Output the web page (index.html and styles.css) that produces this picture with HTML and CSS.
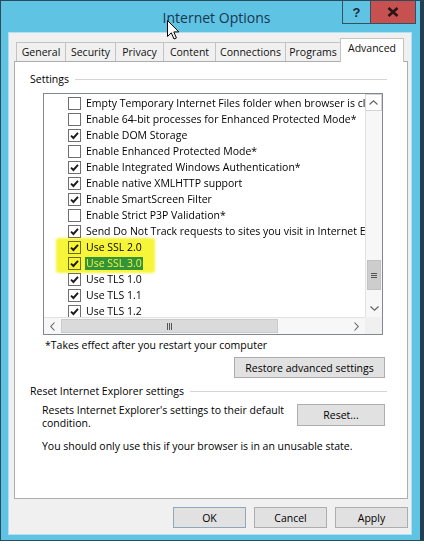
FILE: index.html
```html
<!DOCTYPE html>
<html>
<head>
<meta charset="utf-8">
<title>Internet Options</title>
<link rel="stylesheet" href="styles.css">
</head>
<body>
<div class="window">
  <div class="titlebar">
    <div class="spacer"></div>
    <div class="title">Internet Options</div>
    <div class="caption-btns">
      <div class="cap-btn help">?</div>
      <div class="cap-btn close">
        <svg width="12" height="10" viewBox="0 0 12 10"><path d="M1.5 1 L10.5 9 M10.5 1 L1.5 9" stroke="#2a1616" stroke-width="2.6" fill="none"/></svg>
      </div>
    </div>
  </div>

  <div class="client">
    <div class="tabs">
      <div class="tab t-general">General</div>
      <div class="tab t-security">Security</div>
      <div class="tab t-privacy">Privacy</div>
      <div class="tab t-content">Content</div>
      <div class="tab t-connections">Connections</div>
      <div class="tab t-programs">Programs</div>
      <div class="tab t-advanced active">Advanced</div>
    </div>

    <div class="panel">
      <div class="group-head settings-head"><span>Settings</span><span class="rule"></span></div>

      <div class="listbox">
        <div class="rows">
          <div class="row"><span class="cb"></span><span class="lbl">Empty Temporary Internet Files folder when browser is closed</span></div>
          <div class="row"><span class="cb"></span><span class="lbl">Enable 64-bit processes for Enhanced Protected Mode*</span></div>
          <div class="row"><span class="cb checked"><svg viewBox="0 0 11 11"><path d="M2 5.6 L4.4 8 L9 2.8" /></svg></span><span class="lbl">Enable DOM Storage</span></div>
          <div class="row"><span class="cb"></span><span class="lbl">Enable Enhanced Protected Mode*</span></div>
          <div class="row"><span class="cb checked"><svg viewBox="0 0 11 11"><path d="M2 5.6 L4.4 8 L9 2.8" /></svg></span><span class="lbl">Enable Integrated Windows Authentication*</span></div>
          <div class="row"><span class="cb checked"><svg viewBox="0 0 11 11"><path d="M2 5.6 L4.4 8 L9 2.8" /></svg></span><span class="lbl">Enable native XMLHTTP support</span></div>
          <div class="row"><span class="cb checked"><svg viewBox="0 0 11 11"><path d="M2 5.6 L4.4 8 L9 2.8" /></svg></span><span class="lbl">Enable SmartScreen Filter</span></div>
          <div class="row"><span class="cb"></span><span class="lbl">Enable Strict P3P Validation*</span></div>
          <div class="row"><span class="cb checked"><svg viewBox="0 0 11 11"><path d="M2 5.6 L4.4 8 L9 2.8" /></svg></span><span class="lbl">Send Do Not Track requests to sites you visit in Internet Explorer*</span></div>
          <div class="row"><span class="cb checked"><svg viewBox="0 0 11 11"><path d="M2 5.6 L4.4 8 L9 2.8" /></svg></span><span class="lbl">Use SSL 2.0</span></div>
          <div class="row"><span class="cb checked"><svg viewBox="0 0 11 11"><path d="M2 5.6 L4.4 8 L9 2.8" /></svg></span><span class="lbl selected">Use SSL 3.0</span></div>
          <div class="row"><span class="cb checked"><svg viewBox="0 0 11 11"><path d="M2 5.6 L4.4 8 L9 2.8" /></svg></span><span class="lbl">Use TLS 1.0</span></div>
          <div class="row"><span class="cb checked"><svg viewBox="0 0 11 11"><path d="M2 5.6 L4.4 8 L9 2.8" /></svg></span><span class="lbl">Use TLS 1.1</span></div>
          <div class="row"><span class="cb checked"><svg viewBox="0 0 11 11"><path d="M2 5.6 L4.4 8 L9 2.8" /></svg></span><span class="lbl">Use TLS 1.2</span></div>
          <div class="highlighter"></div>
        </div>

        <div class="vscroll">
          <div class="sb-btn up"><svg width="9" height="5" viewBox="0 0 9 5"><path d="M0.5 4.5 L4.5 0.8 L8.5 4.5" /></svg></div>
          <div class="vtrack"><div class="vthumb"><span class="grip-h"></span></div></div>
          <div class="sb-btn down"><svg width="9" height="5" viewBox="0 0 9 5"><path d="M0.5 0.5 L4.5 4.2 L8.5 0.5" /></svg></div>
        </div>

        <div class="hscroll">
          <div class="sb-btn left"><svg width="5" height="9" viewBox="0 0 5 9"><path d="M4.5 0.5 L0.8 4.5 L4.5 8.5" /></svg></div>
          <div class="htrack"><div class="hthumb"><span class="grip-v"></span></div></div>
          <div class="sb-btn right"><svg width="5" height="9" viewBox="0 0 5 9"><path d="M0.5 0.5 L4.2 4.5 L0.5 8.5" /></svg></div>
        </div>
        <div class="corner"></div>
      </div>

      <div class="note">*Takes effect after you restart your computer</div>
      <div class="restore-row"><div class="btn restore">Restore advanced settings</div></div>

      <div class="group-head reset-head"><span>Reset Internet Explorer settings</span><span class="rule"></span></div>
      <div class="reset-row">
        <p class="reset-text">Resets Internet Explorer's settings to their default<br>condition.</p>
        <div class="btn reset">Reset...</div>
      </div>
      <p class="warn">You should only use this if your browser is in an unusable state.</p>
    </div>

    <div class="footer">
      <div class="btn dlg default">OK</div>
      <div class="btn dlg">Cancel</div>
      <div class="btn dlg">Apply</div>
    </div>
  </div>

  <svg class="cursor" width="13" height="21" viewBox="0 0 13 21"><path d="M0.5 0.5 L0.5 16.5 L4.3 12.8 L7 19 L9.4 18 L6.8 11.9 L11.8 11.9 Z" fill="#fff" stroke="#000" stroke-width="1" stroke-linejoin="round"/></svg>
</div>
</body>
</html>
```

FILE: styles.css
```css
* { box-sizing: border-box; }
html, body { margin: 0; padding: 0; background: #ffffff; }
body {
  width: 424px;
  height: 545px;
  overflow: hidden;
  font-family: "Open Sans", "Noto Sans", sans-serif;
  font-size: 10.5px;
  color: #000;
}

.window {
  position: relative;
  width: 424px;
  height: 541px;
  background: #5fc3e4;
  border: 1px solid #2b4a5a;
  border-right: 4px solid #24404e;
  display: flex;
  flex-direction: column;
}

/* title bar */
.titlebar {
  height: 31px;
  display: grid;
  grid-template-columns: 1fr auto 1fr;
  align-items: start;
}
.title {
  font-size: 14px;
  color: #19364e;
  line-height: 18px;
  padding-top: 8px;
  padding-left: 12px;
}
.caption-btns {
  justify-self: end;
  display: flex;
  margin-right: 4px;
}
.cap-btn {
  height: 23px;
  border: 1px solid #35505e;
  border-top: none;
  display: flex;
  align-items: center;
  justify-content: center;
}
.help {
  width: 29px;
  margin-right: -1px;
  font-family: "Liberation Sans", sans-serif;
  font-weight: bold;
  font-size: 13px;
  color: #1a2a36;
}
.close {
  width: 46px;
  background: #c75050;
}

/* client area */
.client {
  margin: 0 8px 0 7px;
  height: 503px;
  background: #f0f0f0;
  border: 1px solid #b2e0f0;
  display: flex;
  flex-direction: column;
}

.tabs {
  display: flex;
  align-items: flex-end;
  height: 22px;
  margin: 6px 0 0 5px;
  padding-left: 2px;
  position: relative;
  z-index: 2;
}
.tab {
  height: 19px;
  margin-left: -1px;
  border: 1px solid #c3c3c3;
  border-bottom: none;
  background: #f0f0f0;
  display: flex;
  align-items: center;
  justify-content: center;
  white-space: nowrap;
  color: #111;
}
.tab:first-child { margin-left: 0; }
.t-general { width: 50px; }
.t-security { width: 51px; }
.t-privacy { width: 49px; }
.t-content { width: 53px; }
.t-connections { width: 71px; }
.t-programs { width: 56px; }
.t-advanced { width: 64px; }
.tab.active {
  height: 24px;
  margin-bottom: -1px;
  background: #fff;
  align-items: flex-start;
  padding-top: 2px;
}

.panel {
  margin: 0 3px 0 5px;
  height: 438px;
  background: #fff;
  border: 1px solid #adadad;
  display: flex;
  flex-direction: column;
}

.group-head {
  display: flex;
  align-items: center;
  gap: 6px;
  height: 14px;
  line-height: 14px;
  margin: 0 20px 0 15px;
  white-space: nowrap;
}
.settings-head { margin-top: 10px; }
.rule {
  flex: 1;
  height: 1px;
  background: #d5d5d5;
  margin-top: 1px;
}

/* list box */
.listbox {
  margin: 7px 0 0 28px;
  width: 340px;
  height: 242px;
  border: 1px solid #828790;
  display: grid;
  grid-template-columns: 321px 17px;
  grid-template-rows: 223px 17px;
  background: #fff;
}
.rows {
  position: relative;
  overflow: hidden;
  padding-top: 1px;
  background: #fff;
  isolation: isolate;
}
.row {
  height: 16px;
  display: flex;
  align-items: center;
  padding-left: 24px;
  white-space: nowrap;
}
.cb {
  flex: none;
  width: 13px;
  height: 13px;
  border: 1px solid #6f6f6f;
  background: #fff;
  margin-right: 5px;
  display: flex;
  align-items: center;
  justify-content: center;
}
.cb svg { width: 11px; height: 11px; }
.cb path { fill: none; stroke: #1b1b1b; stroke-width: 1.9; }
.lbl { line-height: 13px; padding: 0 1px; margin-left: -1px; }
.lbl.selected { background: #3399ff; color: #fff; }

.highlighter {
  position: absolute;
  left: 12px;
  top: 144px;
  width: 99px;
  height: 35px;
  background: #f6f53a;
  mix-blend-mode: multiply;
  border-radius: 3px;
  filter: blur(0.8px);
}

/* scrollbars */
.vscroll {
  display: flex;
  flex-direction: column;
  background: #f7f7f7;
  border-left: 1px solid #e2e2e2;
}
.sb-btn {
  flex: none;
  display: flex;
  align-items: center;
  justify-content: center;
}
.sb-btn path { fill: none; stroke: #606060; stroke-width: 1.1; }
.vscroll .sb-btn { height: 17px; }
.sb-btn.up { background: #fff; border: 1px solid #d4d4d4; margin-left: -1px; }
.vtrack { flex: 1; }
.vthumb {
  margin-top: 149px;
  height: 30px;
  margin-left: 1px;
  margin-right: 1px;
  background: #cdcdcd;
  border: 1px solid #c2c2c2;
  display: flex;
  align-items: center;
  justify-content: center;
}
.grip-h {
  width: 6px;
  height: 5px;
  border-top: 1px solid #555;
  border-bottom: 1px solid #555;
  position: relative;
}
.grip-h::after {
  content: "";
  position: absolute;
  left: 0; right: 0; top: 1px;
  height: 1px;
  background: #555;
}

.hscroll {
  display: flex;
  background: #f7f7f7;
  border-top: 1px solid #e2e2e2;
}
.hscroll .sb-btn { width: 17px; }
.htrack { flex: 1; display: flex; }
.hthumb {
  width: 217px;
  margin: 1px 0;
  background: #dadada;
  border: 1px solid #cbcbcb;
  display: flex;
  align-items: center;
  justify-content: center;
}
.grip-v {
  width: 5px;
  height: 7px;
  border-left: 1px solid #555;
  border-right: 1px solid #555;
  position: relative;
}
.grip-v::after {
  content: "";
  position: absolute;
  top: 0; bottom: 0; left: 1px;
  width: 1px;
  background: #555;
}
.corner { background: #f0f0f0; }

/* below the list */
.note {
  margin: 3px 0 0 30px;
  line-height: 14px;
}
.restore-row {
  display: flex;
  justify-content: flex-end;
  margin: 5px 22px 0 0;
}
.btn {
  background: #e1e1e1;
  border: 1px solid #adadad;
  display: flex;
  align-items: center;
  justify-content: center;
  white-space: nowrap;
  color: #000;
}
.restore { width: 151px; height: 21px; }
.reset-head { margin-top: 6px; }
.reset-row {
  display: flex;
  justify-content: space-between;
  align-items: flex-start;
  margin: 6px 22px 0 27px;
}
.reset-text {
  margin: 0;
  line-height: 13px;
  white-space: nowrap;
}
.reset { width: 88px; height: 22px; }
.warn {
  margin: 9px 0 0 27px;
  line-height: 14px;
}

.footer {
  display: flex;
  justify-content: flex-end;
  gap: 8px;
  margin: 8px 3px 0 0;
}
.dlg { width: 73px; height: 21px; }
.dlg.default { border-color: #8fa6bb; }

.cursor {
  position: absolute;
  left: 166px;
  top: 19px;
}
```
